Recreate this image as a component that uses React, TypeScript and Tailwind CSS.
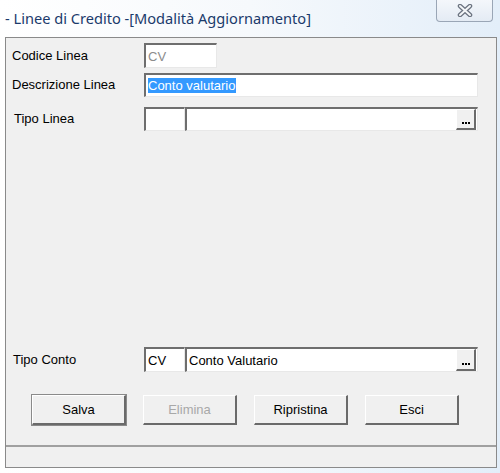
import React from "react";

const sunken =
  "bg-white border-t-2 border-l-2 border-b border-r border-t-[#6e6e6e] border-l-[#6e6e6e] border-b-[#e8e8e8] border-r-[#e8e8e8]";

function Field({
  className = "",
  muted,
  children,
}: {
  className?: string;
  muted?: boolean;
  children?: React.ReactNode;
}) {
  return (
    <div
      className={`${sunken} flex items-center pl-[2px] text-[13px] leading-none ${
        muted ? "text-[#8c8c8c]" : "text-black"
      } ${className}`}
    >
      {children}
    </div>
  );
}

function Ellipsis() {
  return (
    <div className="ml-auto flex h-full w-[20px] items-end justify-center gap-[1px] border-r-2 border-b-2 border-r-[#6a6a6a] border-b-[#6a6a6a] border-t border-l border-t-white border-l-white bg-[#f0f0f0] pb-[4px]">
      <div className="h-[2px] w-[2px] bg-black" />
      <div className="h-[2px] w-[2px] bg-black" />
      <div className="h-[2px] w-[2px] bg-black" />
    </div>
  );
}

function Label({ children }: { children: React.ReactNode }) {
  return <div className="w-[138px] shrink-0 pl-[6px] text-[13px] text-black">{children}</div>;
}

function Btn({
  children,
  disabled,
  primary,
}: {
  children: React.ReactNode;
  disabled?: boolean;
  primary?: boolean;
}) {
  return (
    <div
      className={`flex h-[30px] w-[94px] items-center justify-center border-t border-l border-t-white border-l-white border-r-2 border-b-2 border-r-[#6a6a6a] border-b-[#6a6a6a] bg-[#f0f0f0] text-[13px] ${
        primary ? "outline outline-1 outline-[#8a8a8a]" : ""
      } ${disabled ? "text-[#a8a8a8]" : "text-black"}`}
    >
      {children}
    </div>
  );
}

export default function App() {
  return (
    <div
      className="flex h-[473px] w-[500px] flex-col bg-gradient-to-r from-white via-[#f6f9fc] to-[#e3eef9]"
      style={{ fontFamily: '"Liberation Sans", Arial, sans-serif' }}
    >
      {/* Title bar */}
      <div className="relative flex h-[37px] shrink-0 items-center pl-[5px]">
        <span
          className="text-[14.6px] text-[#1b3a6b]"
          style={{ fontFamily: '"Noto Sans", "Open Sans", sans-serif' }}
        >
          - Linee di Credito -[Modalità Aggiornamento]
        </span>
        <div className="absolute right-[7px] top-0 flex h-[22px] w-[57px] items-center justify-center rounded-b-[4px] border border-t-0 border-[#9aa6b6] bg-gradient-to-b from-[#f4f7fb] to-[#e4ebf4]">
          <svg width="16" height="13" viewBox="0 0 16 13">
            <path d="M3 2 L13 11 M13 2 L3 11" stroke="#6b7380" strokeWidth="4.5" strokeLinecap="round" />
            <path d="M3 2 L13 11 M13 2 L3 11" stroke="#f4f6f8" strokeWidth="2" strokeLinecap="round" />
          </svg>
        </div>
      </div>

      {/* Client area */}
      <div className="ml-[5px] mr-[3px] mb-[5px] flex flex-1 flex-col border border-[#8a8a8a] bg-[#f0f0f0]">
        <div className="flex flex-1 flex-col pt-[5px]">
          <div className="flex items-center">
            <Label>Codice Linea</Label>
            <Field className="h-[25px] w-[73px]" muted>
              CV
            </Field>
          </div>
          <div className="mt-[5px] flex items-center">
            <Label>Descrizione Linea</Label>
            <Field className="h-[24px] w-[334px]">
              <span className="bg-[#3399ff] pr-[1px] leading-[15px] text-white">Conto valutario</span>
            </Field>
          </div>
          <div className="mt-[10px] flex items-center">
            <Label>
              <span className="pl-[2px]">Tipo Linea</span>
            </Label>
            <Field className="h-[24px] w-[41px]" />
            <Field className="h-[24px] w-[293px] pr-[1px]">
              <Ellipsis />
            </Field>
          </div>

          <div className="flex-1" />

          <div className="flex items-center">
            <Label>
              <span className="pl-[1px]">Tipo Conto</span>
            </Label>
            <Field className="h-[25px] w-[41px]">CV</Field>
            <Field className="h-[25px] w-[293px] pr-[1px]">
              <span>Conto Valutario</span>
              <Ellipsis />
            </Field>
          </div>

          <div className="mt-[23px] flex gap-[17px] pl-[26px]">
            <Btn primary>Salva</Btn>
            <Btn disabled>Elimina</Btn>
            <Btn>Ripristina</Btn>
            <Btn>Esci</Btn>
          </div>
          <div className="h-[20px]" />
        </div>
        <div className="h-[22px] border-t-2 border-t-[#a0a0a0]" />
      </div>
    </div>
  );
}
